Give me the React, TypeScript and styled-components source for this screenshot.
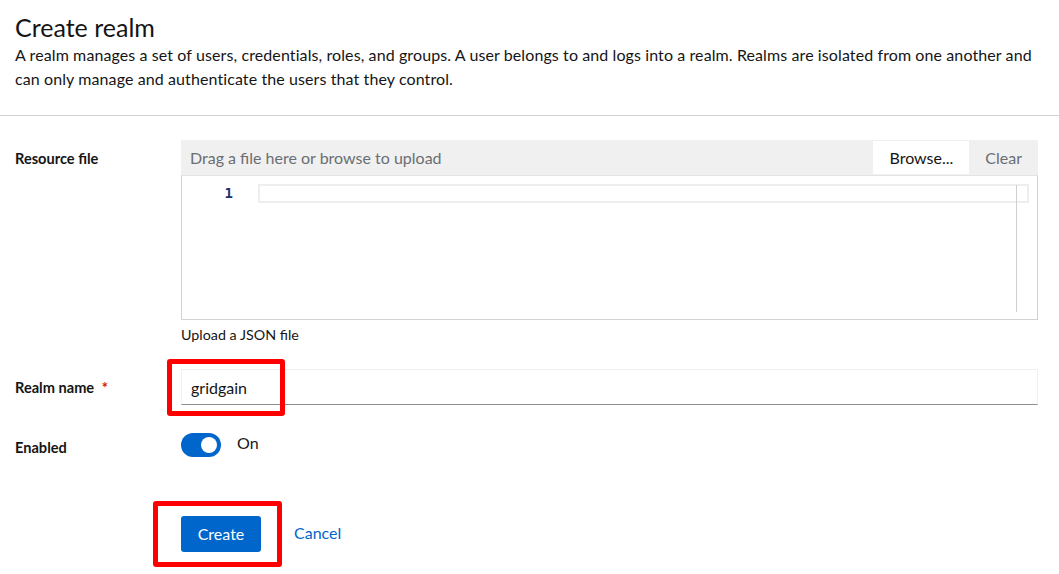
import styled, { createGlobalStyle } from "styled-components";

const GlobalStyle = createGlobalStyle`
  html, body {
    margin: 0;
    padding: 0;
    background: #ffffff;
  }
  body {
    font-family: "Lato", "Liberation Sans", sans-serif;
    color: #151515;
  }
  * {
    box-sizing: border-box;
  }
`;

function App() {
  return (
    <Page>
      <GlobalStyle />
      <Header>
        <Title>Create realm</Title>
        <Description>
          A realm manages a set of users, credentials, roles, and groups. A user
          belongs to and logs into a realm. Realms are isolated from one another
          and can only manage and authenticate the users that they control.
        </Description>
      </Header>
      <Form>
        <Label>Resource file</Label>
        <div>
          <UploadBar>
            <UploadHint>Drag a file here or browse to upload</UploadHint>
            <UploadButton>Browse...</UploadButton>
            <UploadButton $muted>Clear</UploadButton>
          </UploadBar>
          <Editor>
            <Gutter>
              <LineNumber>1</LineNumber>
            </Gutter>
            <CodeArea>
              <ActiveLine />
              <ScrollEdge />
            </CodeArea>
          </Editor>
          <Helper>Upload a JSON file</Helper>
        </div>

        <Label>
          Realm name <Required>*</Required>
        </Label>
        <Annotated>
          <TextInput defaultValue="gridgain" />
          <Highlight $left={-14} $top={-10} $width={118} $height={57} />
        </Annotated>

        <Label>Enabled</Label>
        <SwitchRow>
          <Switch>
            <Knob />
          </Switch>
          <SwitchText>On</SwitchText>
        </SwitchRow>

        <span />
        <Actions>
          <Annotated>
            <PrimaryButton>Create</PrimaryButton>
            <Highlight $left={-28} $top={-15} $width={129} $height={66} />
          </Annotated>
          <LinkButton>Cancel</LinkButton>
        </Actions>
      </Form>
    </Page>
  );
}

const Page = styled.div`
  width: 1059px;
  min-height: 574px;
  background: #ffffff;
`;

const Header = styled.header`
  padding: 12px 21px 24px 15px;
  border-bottom: 1px solid #d2d2d2;
`;

const Title = styled.h1`
  margin: 0;
  font-size: 25px;
  font-weight: 400;
  line-height: 31px;
  color: #151515;
`;

const Description = styled.p`
  margin: 0;
  font-size: 16px;
  letter-spacing: 0.1px;
  line-height: 24px;
  color: #151515;
`;

const Form = styled.div`
  display: grid;
  grid-template-columns: 166px 857px;
  row-gap: 24px;
  padding: 24px 0 0 15px;
`;

const Label = styled.div`
  padding-top: 8px;
  font-size: 14.6px;
  font-weight: 700;
  line-height: 21px;
  color: #151515;
`;

const Required = styled.span`
  margin-left: 4px;
  color: #c9190b;
`;

const UploadBar = styled.div`
  display: flex;
  align-items: stretch;
  height: 35px;
  background: #f0f0f0;
`;

const UploadHint = styled.div`
  flex: 1;
  padding: 0 9px;
  font-size: 16px;
  line-height: 35px;
  color: #6a6e73;
`;

const UploadButton = styled.button<{ $muted?: boolean }>`
  margin: 1px 0;
  padding: 0 16px;
  border: none;
  font-family: inherit;
  font-size: 16px;
  color: ${(p) => (p.$muted ? "#6a6e73" : "#151515")};
  background: ${(p) => (p.$muted ? "#f0f0f0" : "#ffffff")};
`;

const Editor = styled.div`
  display: flex;
  height: 145px;
  border: 1px solid #d2d2d2;
  border-top-color: #e4e4e4;
`;

const Gutter = styled.div`
  width: 66px;
  padding: 6px 15px 0 0;
  text-align: right;
`;

const LineNumber = styled.span`
  font-family: "DejaVu Sans Mono", monospace;
  font-size: 14px;
  font-weight: 700;
  line-height: 18px;
  color: #1e2f6b;
`;

const CodeArea = styled.div`
  position: relative;
  flex: 1;
  padding: 8px 8px 0 10px;
`;

const ActiveLine = styled.div`
  height: 19px;
  border: 2px solid #eeeeee;
`;

const ScrollEdge = styled.div`
  position: absolute;
  top: 9px;
  bottom: 7px;
  right: 20px;
  width: 1px;
  background: #cfcfcf;
`;

const Helper = styled.div`
  margin-top: 4px;
  font-size: 14.3px;
  line-height: 21px;
  color: #151515;
`;

const Annotated = styled.div`
  position: relative;
`;

const Highlight = styled.div<{
  $left: number;
  $top: number;
  $width: number;
  $height: number;
}>`
  position: absolute;
  left: ${(p) => p.$left}px;
  top: ${(p) => p.$top}px;
  width: ${(p) => p.$width}px;
  height: ${(p) => p.$height}px;
  border: 5px solid #ff0000;
  border-radius: 3px;
  pointer-events: none;
`;

const TextInput = styled.input`
  display: block;
  width: 100%;
  height: 36px;
  padding: 0 9px;
  border: 1px solid #f0f0f0;
  border-bottom-color: #8a8d90;
  font-family: inherit;
  font-size: 16px;
  color: #151515;
  background: #ffffff;
  outline: none;
`;

const SwitchRow = styled.div`
  display: flex;
  align-items: center;
  gap: 16px;
  padding-top: 2px;
`;

const Switch = styled.div`
  position: relative;
  width: 40px;
  height: 24px;
  border-radius: 12px;
  background: #0066cc;
`;

const Knob = styled.span`
  position: absolute;
  top: 4px;
  right: 4px;
  width: 16px;
  height: 16px;
  border-radius: 50%;
  background: #ffffff;
`;

const SwitchText = styled.span`
  font-size: 16px;
  line-height: 24px;
  margin-top: -4px;
  color: #151515;
`;

const Actions = styled.div`
  display: flex;
  align-items: center;
  gap: 17px;
  margin-top: 34px;
`;

const PrimaryButton = styled.button`
  height: 36px;
  padding: 0 16px 2px;
  border: none;
  border-radius: 3px;
  background: #0066cc;
  color: #ffffff;
  font-family: inherit;
  font-size: 16px;
  min-width: 80px;
`;

const LinkButton = styled.button`
  padding: 0 16px 4px;
  border: none;
  background: transparent;
  color: #0066cc;
  font-family: inherit;
  font-size: 16px;
`;

export default App;
